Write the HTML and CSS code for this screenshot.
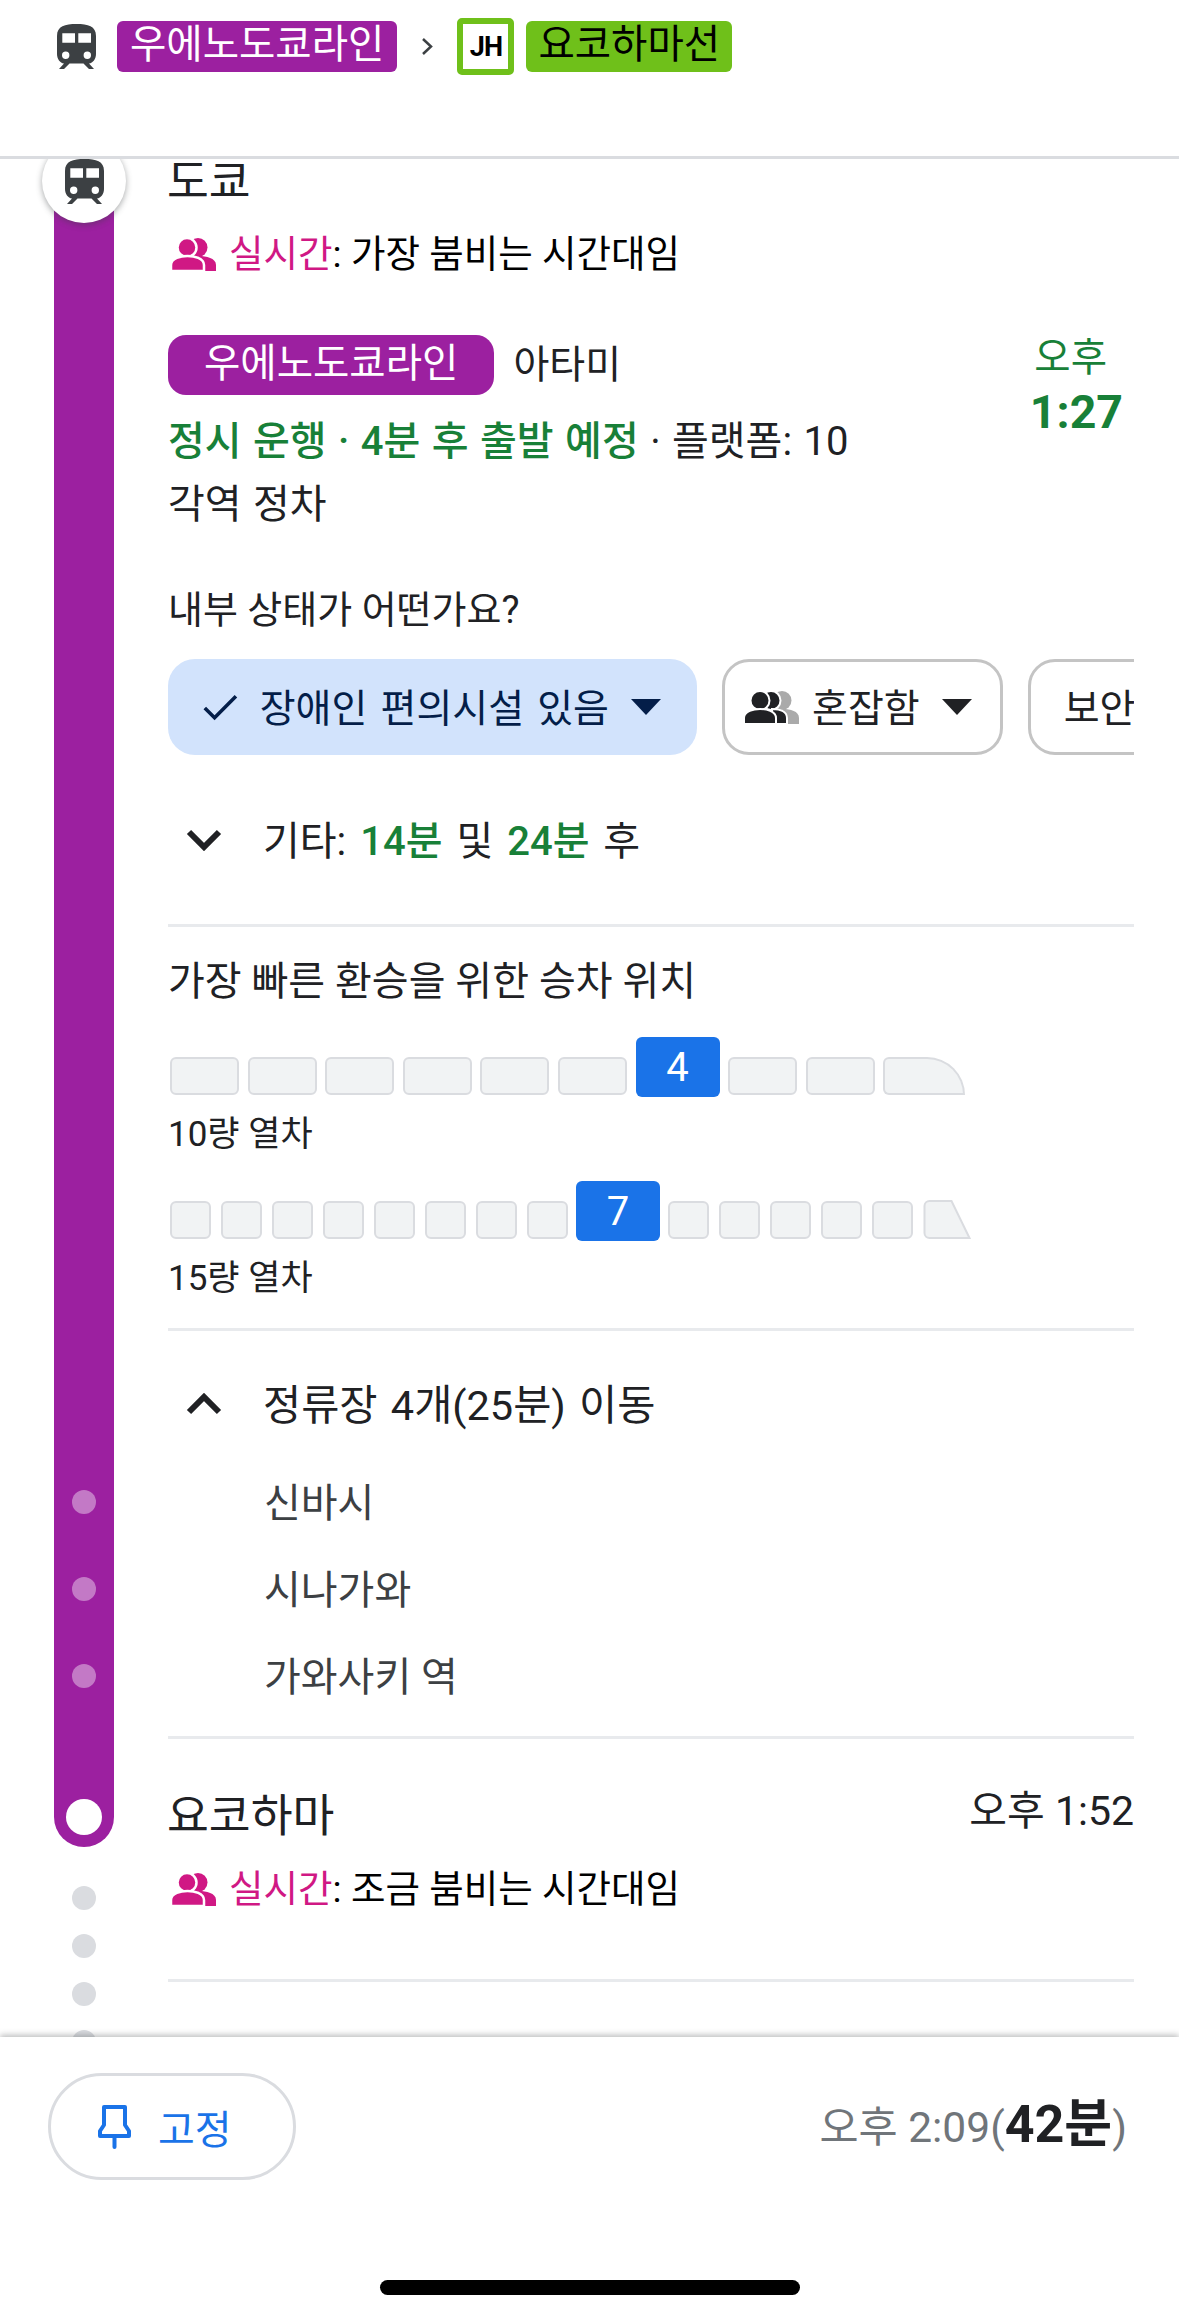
FILE: index.html
```html
<!DOCTYPE html>
<html lang="ko">
<head>
    <meta charset="UTF-8">
    <meta name="viewport" content="width=device-width, initial-scale=1.0">
    <title>우에노도쿄라인 - 요코하마선</title>
    <link rel="stylesheet" href="styles.css">
</head>
<body>
    <svg class="icon-defs" width="0" height="0">
        <symbol id="train" viewBox="0 0 39 45">
            <path fill-rule="evenodd" d="M19.5 0C31 0 39 2 39 12v18c0 5-3 9-7 9.5l5 5.5h-5l-5.5-5.5h-14L7 45H2l5-5.5C3 39 0 35 0 30V12C0 2 8 0 19.5 0zM5.3 9.3v9.400H18V9.3zm16 0v9.400H34V9.3zM8.700 27.600a3.700 3.700 0 1 0 0 7.400 3.700 3.700 0 0 0 0-7.400zm21.600 0a3.700 3.700 0 1 0 0 7.400 3.700 3.700 0 0 0 0-7.400z"/>
        </symbol>
        <symbol id="people" viewBox="0 0 45 33">
            <circle cx="27" cy="9.5" r="9.5"/>
            <path d="M28 18c7 0 17 2 17 9v6H28z"/>
            <circle cx="16" cy="9.5" r="9.5" stroke="#fff" stroke-width="2.5"/>
            <path d="M0 33v-6c0-7 10-9 16.5-9S33 20 33 27v6z" stroke="#fff" stroke-width="2.5"/>
        </symbol>
    </svg>

    <div class="app">
        <header class="topbar">
            <svg class="train-icon"><use href="#train"/></svg>
            <span class="line-tag line-tag-purple">우에노도쿄라인</span>
            <svg class="crumb" viewBox="0 0 12 19"><path d="M2 2l8 7.5L2 17" fill="none" stroke="#3c4043" stroke-width="2.5"/></svg>
            <span class="jh-badge">JH</span>
            <span class="line-tag line-tag-green">요코하마선</span>
        </header>

        <main class="trip">
            <div class="rail">
                <div class="rail-bar">
                    <div class="rail-badge"><svg class="train-icon"><use href="#train"/></svg></div>
                    <span class="stop-dot"></span>
                    <span class="stop-dot"></span>
                    <span class="stop-dot"></span>
                    <span class="end-dot"></span>
                </div>
                <div class="walk-dots">
                    <span></span><span></span><span></span><span></span>
                </div>
            </div>

            <div class="details">
                <h2 class="station first-station">도쿄</h2>
                <p class="crowd">
                    <svg class="people-icon"><use href="#people"/></svg>
                    <span><span class="pink">실시간</span>: 가장 붐비는 시간대임</span>
                </p>

                <div class="departure">
                    <div>
                        <div class="route-row">
                            <span class="route-chip">우에노도쿄라인</span>
                            <span class="route-name">아타미</span>
                        </div>
                        <p class="status"><span class="green">정시 운행 · 4분 후 출발 예정</span> · 플랫폼: 10</p>
                        <p class="status">각역 정차</p>
                    </div>
                    <div class="depart-time">
                        <div class="depart-ampm">오후</div>
                        <div class="depart-clock">1:27</div>
                    </div>
                </div>

                <p class="question">내부 상태가 어떤가요?</p>
                <div class="chips">
                    <div class="chip chip-active">
                        <svg class="check" viewBox="0 0 39 30"><path d="M2 16l11 11L37 3" fill="none" stroke="#041e49" stroke-width="4"/></svg>
                        <span class="chip-text">장애인 편의시설 있음</span>
                        <span class="caret caret-navy"></span>
                    </div>
                    <div class="chip chip-outline">
                        <svg class="crowded-icon" viewBox="0 0 55 33">
                            <circle cx="38" cy="9.5" r="9.5" fill="#aaa"/>
                            <path d="M39 18c7 0 16 2 16 9v6H39z" fill="#aaa"/>
                            <circle cx="27" cy="9.5" r="9.5" fill="#202124" stroke="#fff" stroke-width="2"/>
                            <path d="M28 18c7 0 15 2 15 9v6H28z" fill="#202124" stroke="#fff" stroke-width="2"/>
                            <circle cx="16" cy="9.5" r="9.5" fill="#202124" stroke="#fff" stroke-width="2"/>
                            <path d="M0 33v-6c0-7 10-9 16-9s16 2 16 9v6z" fill="#202124" stroke="#fff" stroke-width="2"/>
                        </svg>
                        <span class="chip-text">혼잡함</span>
                        <span class="caret"></span>
                    </div>
                    <div class="chip chip-outline chip-last">
                        <span class="chip-text">보안 요원</span>
                    </div>
                </div>

                <div class="toggle-row others">
                    <svg class="chevron" viewBox="0 0 36 22"><path d="M3 3l15 15L33 3" fill="none" stroke="#202124" stroke-width="6"/></svg>
                    <span class="toggle-text">기타: <span class="green">14분</span> 및 <span class="green">24분</span> 후</span>
                </div>

                <hr class="rule rule-others">

                <p class="board-title">가장 빠른 환승을 위한 승차 위치</p>

                <div class="train train-long">
                    <span class="car"></span><span class="car"></span><span class="car"></span>
                    <span class="car"></span><span class="car"></span><span class="car"></span>
                    <span class="car-pick">4</span>
                    <span class="car"></span><span class="car"></span>
                    <span class="car car-nose"></span>
                </div>
                <p class="train-label">10량 열차</p>

                <div class="train train-short">
                    <span class="car"></span><span class="car"></span><span class="car"></span><span class="car"></span>
                    <span class="car"></span><span class="car"></span><span class="car"></span><span class="car"></span>
                    <span class="car-pick">7</span>
                    <span class="car"></span><span class="car"></span><span class="car"></span>
                    <span class="car"></span><span class="car"></span>
                    <svg class="car-wedge" viewBox="0 0 48 39"><path d="M1 6a5 5 0 0 1 5-5h22l18 37H6a5 5 0 0 1-5-5z" fill="#f1f3f4" stroke="#dadce0" stroke-width="2"/></svg>
                </div>
                <p class="train-label">15량 열차</p>

                <hr class="rule rule-train">

                <div class="toggle-row">
                    <svg class="chevron" viewBox="0 0 36 22"><path d="M3 19L18 4l15 15" fill="none" stroke="#202124" stroke-width="6"/></svg>
                    <span class="toggle-text toggle-large">정류장 4개(25분) 이동</span>
                </div>
                <ul class="stops">
                    <li>신바시</li>
                    <li>시나가와</li>
                    <li>가와사키 역</li>
                </ul>

                <hr class="rule rule-stops">

                <div class="arrival">
                    <h2 class="station">요코하마</h2>
                    <span class="arrival-time">오후 1:52</span>
                </div>
                <p class="crowd crowd-arrival">
                    <svg class="people-icon"><use href="#people"/></svg>
                    <span><span class="pink">실시간</span>: 조금 붐비는 시간대임</span>
                </p>

                <hr class="rule rule-arrival">
            </div>
        </main>

        <footer class="bottom">
            <div class="bottom-row">
                <div class="pin-button">
                    <svg class="pin" viewBox="0 0 33 44">
                        <path d="M6 2h21v18l4 6v5H2v-5l4-6z" fill="none" stroke="#1a73e8" stroke-width="4" stroke-linejoin="round"/>
                        <path d="M16.5 32v10" fill="none" stroke="#1a73e8" stroke-width="4" stroke-linecap="round"/>
                    </svg>
                    <span>고정</span>
                </div>
                <div class="total">오후 2:09(<strong>42분</strong>)</div>
            </div>
            <div class="home-bar"></div>
        </footer>
    </div>
</body>
</html>
```

FILE: styles.css
```css
* {
    box-sizing: border-box;
}
body {
    font-family: Roboto, 'Noto Sans CJK KR', sans-serif;
    font-size: 40px;
    color: #202124;
    background-color: #ffffff;
    margin: 0;
}
h2, p, ul {
    margin: 0;
    padding: 0;
}
.icon-defs {
    display: block;
}
.app {
    display: flex;
    flex-direction: column;
    height: 2319px;
    overflow: hidden;
}
.pink {
    color: #d01884;
}
.green {
    color: #188038;
    font-weight: 500;
}
/* Top bar */
.topbar {
    position: relative;
    z-index: 1;
    display: flex;
    align-items: center;
    flex-shrink: 0;
    height: 159px;
    padding: 18px 0 81px 57px;
    border-bottom: 3px solid #dadce0;
    background-color: #ffffff;
}
.train-icon {
    width: 39px;
    height: 45px;
    fill: #3c4043;
}
.line-tag {
    height: 51px;
    padding: 0 13px;
    border-radius: 6px;
    font-size: 39.5px;
    line-height: 48px;
    white-space: nowrap;
}
.line-tag-purple {
    margin-left: 21px;
    background-color: #9c20a0;
    color: #ffffff;
}
.line-tag-green {
    margin-left: 12px;
    padding: 0 12px;
    background-color: #6fc01a;
    color: #000000;
}
.crumb {
    width: 12px;
    height: 19px;
    margin: 0 24px;
}
.jh-badge {
    display: flex;
    align-items: center;
    justify-content: center;
    width: 57px;
    height: 57px;
    border: 6px solid #6fc01a;
    border-radius: 5px;
    color: #000000;
    font-size: 27px;
    font-weight: 700;
    letter-spacing: -1px;
}
/* Trip body */
.trip {
    display: flex;
    flex: 1;
    min-height: 0;
}
.rail {
    flex-shrink: 0;
    display: flex;
    flex-direction: column;
    align-items: center;
    width: 60px;
    margin: 0 54px;
}
.rail-bar {
    position: relative;
    display: flex;
    flex-direction: column;
    align-items: center;
    gap: 63px;
    flex-shrink: 0;
    width: 60px;
    height: 1688px;
    padding-top: 1331px;
    border-radius: 0 0 30px 30px;
    background-color: #9c20a0;
}
.rail-badge {
    position: absolute;
    top: -20px;
    left: -12px;
    display: flex;
    align-items: center;
    justify-content: center;
    width: 84px;
    height: 84px;
    border-radius: 50%;
    background-color: #ffffff;
    box-shadow: 0 2px 6px rgba(60, 64, 67, 0.45);
}
.stop-dot {
    width: 24px;
    height: 24px;
    border-radius: 50%;
    background-color: rgba(255, 255, 255, 0.4);
}
.end-dot {
    width: 36px;
    height: 36px;
    margin-top: 48px;
    border-radius: 50%;
    background-color: #ffffff;
}
.walk-dots {
    display: flex;
    flex-direction: column;
    gap: 24px;
    margin-top: 39px;
}
.walk-dots span {
    flex-shrink: 0;
    width: 24px;
    height: 24px;
    border-radius: 50%;
    background-color: #dadce0;
}
.details {
    flex: 1;
    min-width: 0;
    padding-right: 45px;
}
.station {
    margin-left: -1px;
    font-size: 45.5px;
    font-weight: 400;
    line-height: 50px;
}
.first-station {
    line-height: 48px;
}
.crowd {
    display: flex;
    align-items: center;
    gap: 13px;
    margin-top: 22px;
    color: #000000;
    font-size: 37.5px;
    line-height: 50px;
}
.people-icon {
    width: 45px;
    height: 33px;
    margin-left: 3px;
    fill: #d01884;
}
/* Departure */
.departure {
    display: flex;
    justify-content: space-between;
    margin-top: 56px;
}
.route-row {
    display: flex;
    align-items: flex-start;
    gap: 19px;
    height: 60px;
}
.route-chip {
    height: 60px;
    padding: 0 36px;
    border-radius: 18px;
    background-color: #9c20a0;
    color: #ffffff;
    font-size: 39.5px;
    line-height: 58px;
}
.route-name {
    font-size: 39px;
    line-height: 60px;
}
.status {
    line-height: 63px;
    word-spacing: 1.5px;
}
.route-row + .status {
    margin-top: 15px;
}
.depart-time {
    margin: -2px 11px 0 0;
    color: #188038;
    text-align: right;
}
.depart-ampm {
    padding-right: 16px;
    font-size: 39.5px;
    line-height: 50px;
}
.depart-clock {
    margin-top: -1px;
    font-size: 46.5px;
    font-weight: 700;
    line-height: 60px;
}
.question {
    margin-top: 49px;
    font-size: 38px;
    line-height: 50px;
}
/* Filter chips */
.chips {
    display: flex;
    gap: 25px;
    margin-top: 24px;
    overflow: hidden;
}
.chip {
    display: flex;
    align-items: center;
    flex-shrink: 0;
    height: 96px;
    border-radius: 27px;
    font-size: 39px;
    white-space: nowrap;
}
.chip-text {
    margin-bottom: 4px;
    word-spacing: 3.5px;
}
.chip-active {
    width: 529px;
    padding: 0 36px 0 35px;
    background-color: #d2e3fc;
    color: #041e49;
}
.chip-outline {
    padding: 0 28px 0 19px;
    border: 3px solid #c4c4c4;
}
.chip-last {
    padding-left: 33px;
}
.check {
    width: 39px;
    height: 30px;
    margin-right: 22px;
}
.caret {
    width: 0;
    height: 0;
    margin-left: 22px;
    border-left: 15px solid transparent;
    border-right: 15px solid transparent;
    border-top: 16px solid #202124;
}
.caret-navy {
    border-top-color: #041e49;
}
.crowded-icon {
    width: 55px;
    height: 33px;
    margin-right: 13px;
}
/* Expand rows */
.toggle-row {
    display: flex;
    align-items: center;
    height: 60px;
    margin-top: 43px;
    padding-left: 18px;
}
.others {
    margin-top: 55px;
}
.toggle-text {
    margin-bottom: 4px;
    word-spacing: 4px;
}
.toggle-large {
    font-size: 41.5px;
    word-spacing: 3px;
}
.chevron {
    width: 36px;
    height: 22px;
    margin-right: 41px;
}
.rule {
    height: 3px;
    margin: 0;
    border: 0;
    background-color: #e8eaed;
}
.rule-others {
    margin-top: 54px;
}
.rule-train {
    margin-top: 27px;
}
.rule-stops {
    margin-top: 15px;
}
.rule-arrival {
    margin-top: 65px;
}
/* Boarding position */
.board-title {
    margin-top: 30px;
    line-height: 50px;
}
.train {
    display: flex;
    align-items: flex-end;
    height: 60px;
    padding-left: 2px;
    margin-top: 30px;
}
.train + .train-label + .train {
    margin-top: 24px;
}
.car {
    height: 38px;
    margin-bottom: 2px;
    border: 2px solid #dadce0;
    border-radius: 6px;
    background-color: #f1f3f4;
}
.train-long {
    gap: 8.6px;
}
.train-long .car {
    width: 69px;
}
.train-long .car-nose {
    width: 82px;
    border-radius: 6px 38px 0 6px;
}
.train-short {
    gap: 10px;
}
.train-short .car {
    width: 41px;
}
.train-short .car-pick {
    margin: 0 -2px;
}
.car-wedge {
    width: 49px;
    height: 39px;
    margin-bottom: 2px;
}
.car-pick {
    display: flex;
    align-items: center;
    justify-content: center;
    width: 84px;
    height: 60px;
    border-radius: 6px;
    background-color: #1a73e8;
    color: #ffffff;
}
.train-label {
    margin-top: 16px;
    font-size: 35px;
    line-height: 44px;
}
/* Stops */
.stops {
    margin-top: 26px;
    list-style: none;
    color: #3c4043;
}
.stops li {
    height: 87px;
    padding-left: 96px;
    line-height: 87px;
}
.arrival {
    display: flex;
    justify-content: space-between;
    align-items: flex-start;
    margin-top: 53px;
}
.arrival-time {
    font-size: 41px;
    line-height: 38px;
}
/* Bottom bar */
.bottom {
    position: relative;
    z-index: 1;
    flex-shrink: 0;
    height: 282px;
    padding-top: 36px;
    background-color: #ffffff;
    box-shadow: 0 -2px 6px rgba(60, 64, 67, 0.35);
}
.bottom-row {
    display: flex;
    justify-content: space-between;
    align-items: center;
    padding: 0 52px 0 48px;
}
.pin-button {
    display: flex;
    align-items: center;
    gap: 27px;
    width: 248px;
    height: 107px;
    padding-left: 47px;
    border: 3px solid #dadce0;
    border-radius: 54px;
    color: #1a73e8;
}
.pin {
    width: 33px;
    height: 44px;
}
.total {
    color: #70757a;
    font-size: 42.5px;
    line-height: 60px;
}
.total strong {
    color: #202124;
    font-size: 52px;
}
.home-bar {
    width: 420px;
    height: 15px;
    margin: 100px auto 0;
    border-radius: 8px;
    background-color: #000000;
}
```
